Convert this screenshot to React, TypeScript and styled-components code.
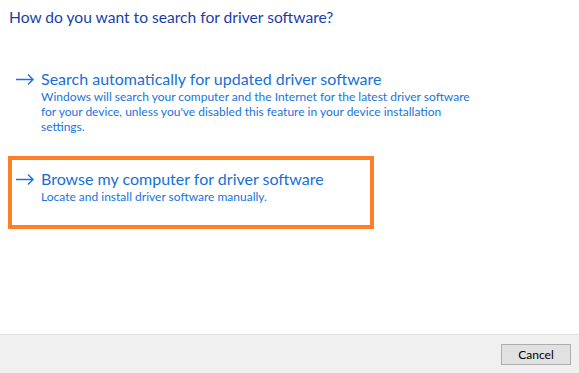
import React from "react";
import styled, { createGlobalStyle } from "styled-components";

const GlobalStyle = createGlobalStyle`
  html, body {
    margin: 0;
    padding: 0;
    background: #ffffff;
  }
  body {
    font-family: Lato, "Open Sans", sans-serif;
  }
`;

const Dialog = styled.div`
  display: flex;
  flex-direction: column;
  width: 579px;
  height: 373px;
  background: #ffffff;
  overflow: hidden;
`;

const Content = styled.div`
  flex: 1 1 auto;
  padding: 6px 0 0 9px;
`;

const Title = styled.div`
  font-size: 15.6px;
  line-height: 22px;
  color: #1a3ea8;
`;

const OptionList = styled.div`
  display: flex;
  flex-direction: column;
  margin: 28px 0 0 -1px;
`;

type OptionBoxProps = {
  highlighted?: boolean;
};

const OptionBox = styled.div<OptionBoxProps>`
  display: flex;
  width: ${(props) => (props.highlighted ? "366px" : "520px")};
  box-sizing: border-box;
  border: 4px solid ${(props) => (props.highlighted ? "#fd7f28" : "transparent")};
  padding: 8px 4px ${(props) => (props.highlighted ? "21px" : "18px")} 4px;
  cursor: pointer;
`;

const ArrowCell = styled.div`
  flex: 0 0 25px;
  height: 22px;
  display: flex;
  align-items: center;
`;

const TextCell = styled.div`
  display: flex;
  flex-direction: column;
  width: 432px;
`;

const Heading = styled.div`
  font-size: 16px;
  line-height: 22px;
  color: #1670d6;
  white-space: nowrap;
`;

const Description = styled.div`
  font-size: 12px;
  line-height: 15px;
  margin-top: -1px;
  color: #1874dc;
`;

const Footer = styled.div`
  flex: 0 0 39px;
  display: flex;
  justify-content: flex-end;
  align-items: flex-start;
  padding: 9px 8px 0 0;
  box-sizing: border-box;
  border-top: 1px solid #dfdfdf;
  background: #f0f0f0;
`;

const Button = styled.button`
  width: 70px;
  height: 21px;
  padding: 0;
  border: 1px solid #adadad;
  background: #e1e1e1;
  color: #000000;
  font-family: Lato, "Open Sans", sans-serif;
  font-size: 12px;
  line-height: 19px;
`;

const Arrow: React.FC = () => (
  <svg width="18" height="11" viewBox="0 0 18 11" fill="none">
    <path d="M0 5.5 H17 M12 0.5 L17 5.5 L12 10.5" stroke="#1874dc" strokeWidth="1.4" />
  </svg>
);

type OptionProps = {
  heading: string;
  description: string;
  highlighted?: boolean;
};

const Option: React.FC<OptionProps> = ({ heading, description, highlighted }) => (
  <OptionBox highlighted={highlighted}>
    <ArrowCell>
      <Arrow />
    </ArrowCell>
    <TextCell>
      <Heading>{heading}</Heading>
      <Description>{description}</Description>
    </TextCell>
  </OptionBox>
);

const App: React.FC = () => (
  <>
    <GlobalStyle />
    <Dialog>
      <Content>
        <Title>How do you want to search for driver software?</Title>
        <OptionList>
          <Option
            heading="Search automatically for updated driver software"
            description="Windows will search your computer and the Internet for the latest driver software for your device, unless you've disabled this feature in your device installation settings."
          />
          <Option
            highlighted
            heading="Browse my computer for driver software"
            description="Locate and install driver software manually."
          />
        </OptionList>
      </Content>
      <Footer>
        <Button>Cancel</Button>
      </Footer>
    </Dialog>
  </>
);

export default App;
